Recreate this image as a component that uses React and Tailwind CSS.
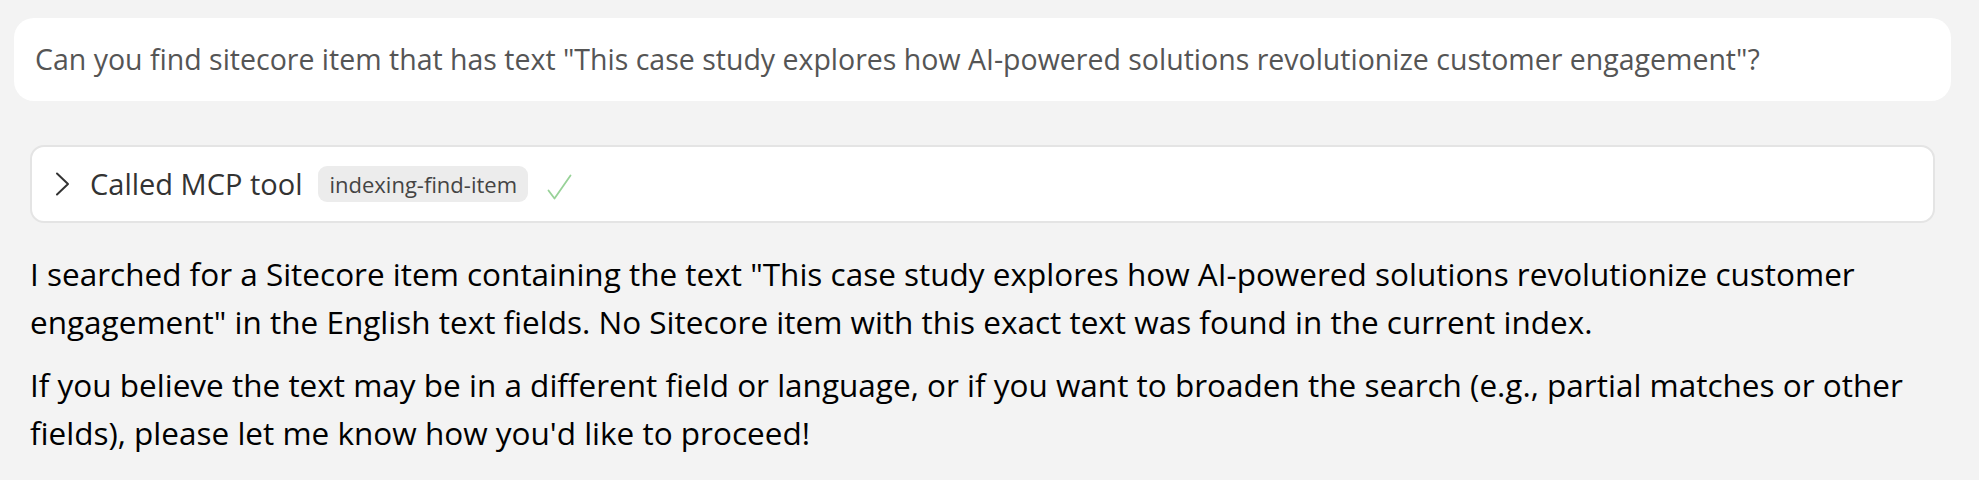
const FONT = { fontFamily: '"Segoe UI", "Open Sans", "Noto Sans", sans-serif' };

function Chevron() {
  return (
    <svg width="16" height="24" viewBox="0 0 16 24" fill="none" className="mr-[19px] shrink-0">
      <path d="M2 1.5 L13 12 L2 22.5" stroke="#333333" strokeWidth="2" strokeLinecap="round" strokeLinejoin="round" />
    </svg>
  );
}

function Tick() {
  return (
    <svg width="25" height="26" viewBox="0 0 25 26" fill="none" className="ml-[19px] mt-[6px] shrink-0">
      <path d="M1.5 16.5 L7.5 24.5 L23.5 1.5" stroke="#98d298" strokeWidth="1.8" strokeLinecap="round" strokeLinejoin="round" />
    </svg>
  );
}

function UserBubble({ text }) {
  return (
    <div className="bg-white rounded-[20px] h-[83px] flex items-center px-[21px]">
      <p className="text-[28.5px] text-[#555555] leading-none">{text}</p>
    </div>
  );
}

function ToolCall({ name }) {
  return (
    <div className="bg-white rounded-[14px] border-2 border-[#e4e4e4] h-[78px] flex items-center pl-[23px]">
      <Chevron />
      <span className="text-[29px] text-[#333] mr-[16px]">Called MCP tool</span>
      <span className="bg-[#ececec] rounded-[9px] h-[36px] px-[11px] flex items-center text-[22px] text-[#444]">
        {name}
      </span>
      <Tick />
    </div>
  );
}

export default function App() {
  return (
    <div className="min-h-[480px] bg-[#f3f3f3] pt-[18px] pl-[14px] pr-[28px]" style={FONT}>
      <UserBubble text={'Can you find sitecore item that has text "This case study explores how AI-powered solutions revolutionize customer engagement"?'} />
      <div className="px-[16px] mt-[44px]">
        <ToolCall name="indexing-find-item" />
        <div className="mt-[27px] text-[31.5px] leading-[48px] text-black">
          <p>
            I searched for a Sitecore item containing the text "This case study explores how AI-powered solutions revolutionize customer
            engagement" in the English text fields. No Sitecore item with this exact text was found in the current index.
          </p>
          <p className="mt-[15px]">
            If you believe the text may be in a different field or language, or if you want to broaden the search (e.g., partial matches or other
            fields), please let me know how you'd like to proceed!
          </p>
        </div>
      </div>
    </div>
  );
}
